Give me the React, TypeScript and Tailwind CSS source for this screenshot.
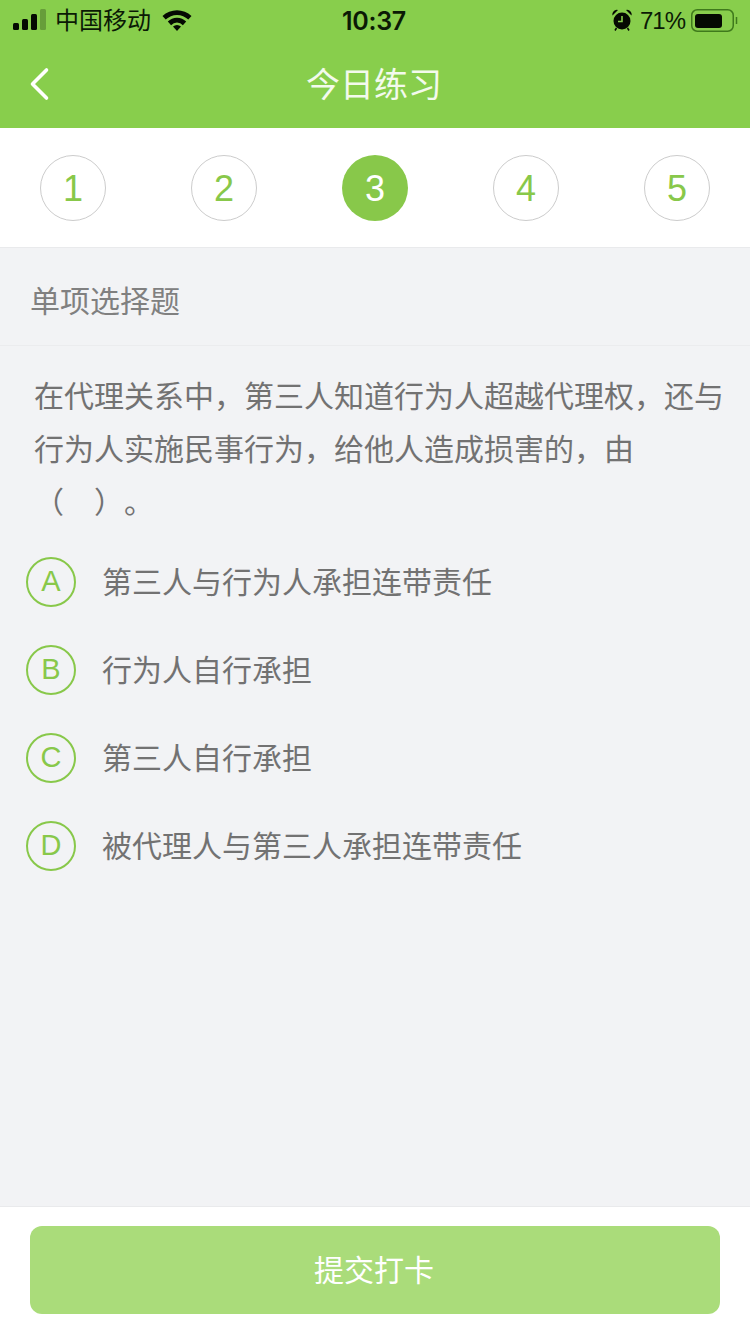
import React from 'react';

const font = "font-['Liberation_Sans','Noto_Sans_CJK_SC',sans-serif]";

const steps = [1, 2, 3, 4, 5];

const options = [
  { key: 'A', text: '第三人与行为人承担连带责任' },
  { key: 'B', text: '行为人自行承担' },
  { key: 'C', text: '第三人自行承担' },
  { key: 'D', text: '被代理人与第三人承担连带责任' },
];

const StatusBar = () => (
  <div className="relative flex h-10 items-center justify-between pl-[13px] pr-[12px] text-[24px] text-[#0b1a05]">
    <div className="flex items-center">
      <svg width="34" height="22" viewBox="0 0 34 22" className="mr-2">
        <rect x="0" y="14" width="6" height="7" rx="1.5" fill="#050a02" />
        <rect x="9" y="10" width="6" height="11" rx="1.5" fill="#050a02" />
        <rect x="18" y="5" width="6" height="16" rx="1.5" fill="#050a02" />
        <rect x="27" y="0" width="6" height="21" rx="1.5" fill="#050a02" opacity="0.25" />
      </svg>
      <span className="pt-[2px] leading-none">中国移动</span>
      <svg width="30" height="22" viewBox="0 0 30 22" className="ml-[11px]">
        <path d="M0.5 7 A21 21 0 0 1 29.5 7 L26.3 10.6 A16 16 0 0 0 3.7 10.6 Z" fill="#050a02" />
        <path d="M5.8 12.6 A13 13 0 0 1 24.2 12.6 L20.9 16.2 A8 8 0 0 0 9.1 16.2 Z" fill="#050a02" />
        <path d="M11 17.6 A6 6 0 0 1 19 17.6 L15 22 Z" fill="#050a02" />
      </svg>
    </div>
    <span className="absolute left-[342px] top-[4px] text-[25px] font-semibold leading-[34px] tracking-[-0.3px] font-['Inter',sans-serif]">10:37</span>
    <div className="flex items-center">
      <svg width="20" height="22" viewBox="0 0 20 22" className="mr-[8px]">
        <circle cx="10" cy="12" r="8.5" fill="#050a02" />
        <path d="M10 7 V12.5 H6" stroke="#88ce4c" strokeWidth="1.6" fill="none" />
        <path d="M0.5 6.5 A4.5 4.5 0 0 1 6 1 Z M19.5 6.5 A4.5 4.5 0 0 0 14 1 Z" fill="#050a02" />
        <path d="M4.5 19 L3 21.5 M15.5 19 L17 21.5" stroke="#050a02" strokeWidth="1.5" />
      </svg>
      <span className="mr-[6px] pt-px leading-none tracking-[-1px]">71%</span>
      <svg width="47" height="23" viewBox="0 0 47 23">
        <rect x="0.75" y="0.75" width="41.5" height="21.5" rx="5.5" fill="none" stroke="#3f7a1c" strokeWidth="1.5" />
        <rect x="4" y="5" width="27" height="14" rx="3" fill="#050a02" />
        <path d="M45.5 8 V15" stroke="#3f7a1c" strokeWidth="1.5" />
      </svg>
    </div>
  </div>
);

const App = () => {
  return (
    <div className={`flex h-[1334px] w-[750px] flex-col overflow-hidden bg-[#f2f3f5] ${font}`}>
      <header className="h-32 shrink-0 bg-[#88ce4c]">
        <StatusBar />
        <div className="relative flex h-[88px] items-center justify-center pr-[2px] pt-px">
          <svg width="22" height="34" viewBox="0 0 22 34" className="absolute left-[28px] top-[27px]">
            <path d="M18.5 3 L4.5 17 L18.5 31" fill="none" stroke="#ffffff" strokeWidth="3.6" strokeLinecap="round" strokeLinejoin="round" />
          </svg>
          <h1 className="text-[34px] font-normal leading-none text-white/90">今日练习</h1>
        </div>
      </header>

      <div className="flex h-[120px] shrink-0 items-start justify-between border-b border-[#e9eaec] bg-white px-10 pt-[27px]">
        {steps.map((n) =>
          n === 3 ? (
            <div key={n} className="flex h-[66px] w-[66px] items-center justify-center rounded-full bg-[#88c84a] pt-[2px] text-[36px] text-white">
              {n}
            </div>
          ) : (
            <div key={n} className="flex h-[66px] w-[66px] items-center justify-center rounded-full border border-[#cccccc] pt-[2px] text-[36px] text-[#88c84a]">
              {n}
            </div>
          ),
        )}
      </div>

      <div className="flex h-[98px] shrink-0 items-center border-b border-[#ebecee] pl-[30px] pt-[10px] text-[30px] leading-none text-[#808080]">
        单项选择题
      </div>

      <main className="flex-1">
        <p className="pl-[34px] pr-[25px] pt-[24px] text-[30px] leading-[53px] text-[#727272]">
          在代理关系中，第三人知道行为人超越代理权，还与行为人实施民事行为，给他人造成损害的，由
          <br />
          （　）&#8203;。
        </p>
        <ul className="mt-[28px] flex flex-col gap-[38px] pl-[26px]">
          {options.map((o) => (
            <li key={o.key} className="flex h-[50px] items-center">
              <span className="flex h-[50px] w-[50px] shrink-0 items-center justify-center rounded-full border-2 border-[#88c84a] text-[29px] text-[#88c84a]">
                {o.key}
              </span>
              <span className="ml-[26px] pt-[2px] text-[30px] leading-none text-[#727272]">{o.text}</span>
            </li>
          ))}
        </ul>
      </main>

      <footer className="h-[128px] shrink-0 border-t border-[#e9eaec] bg-white px-[30px] pt-[19px]">
        <button className="flex h-[88px] w-[690px] items-center justify-center rounded-xl bg-[#aadc7a] pr-[2px] text-[30px] text-white">
          提交打卡
        </button>
      </footer>
    </div>
  );
};

export default App;
